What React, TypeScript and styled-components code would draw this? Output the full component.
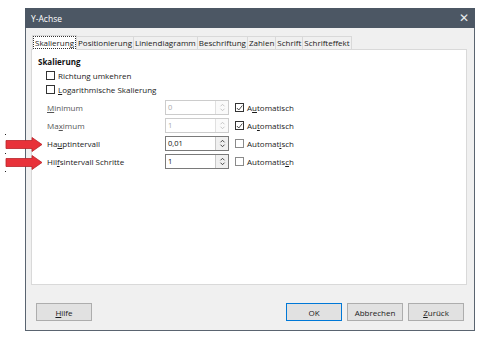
import React from "react";
import styled, { createGlobalStyle } from "styled-components";

const Global = createGlobalStyle`
  html, body { margin: 0; padding: 0; background: #ffffff; }
  body { font-family: "Open Sans", "Noto Sans", "Liberation Sans", sans-serif; }
`;

const Page = styled.div`
  position: relative;
  width: 489px;
  height: 341px;
  padding: 8px 0 0 25px;
  box-sizing: border-box;
`;

const Dialog = styled.div`
  width: 450px;
  height: 323px;
  box-sizing: border-box;
  border: 1px solid #5a6470;
  border-top: none;
  background: #f0f0f0;
  display: flex;
  flex-direction: column;
`;

const TitleBar = styled.div`
  height: 20px;
  background: #4c5764;
  color: #ffffff;
  display: flex;
  align-items: center;
  justify-content: space-between;
  padding: 0 6px 0 6px;
  font-size: 8.5px;
  margin: 0 -1px;
`;

const Close = styled.span`
  font-size: 12px;
  color: #e8ebee;
  font-family: "DejaVu Sans", sans-serif;
  line-height: 1;
`;

const Body = styled.div`
  flex: 1;
  display: flex;
  flex-direction: column;
  padding: 8px 7px 9px 5px;
`;

const Tabs = styled.div`
  display: flex;
  align-items: flex-end;
  height: 14px;
  padding-left: 1px;
`;

const Tab = styled.div<{ $active?: boolean }>`
  font-size: 8px;
  color: #1a1a1a;
  padding: 0 1px;
  height: ${(p) => (p.$active ? "14px" : "12px")};
  line-height: ${(p) => (p.$active ? "13px" : "12px")};
  background: ${(p) => (p.$active ? "#ffffff" : "#f0f0f0")};
  border: 1px solid #d9d9d9;
  border-bottom: ${(p) => (p.$active ? "none" : "1px solid #d9d9d9")};
  margin-left: ${(p) => (p.$active ? "0" : "-1px")};
  position: relative;
  z-index: ${(p) => (p.$active ? 1 : 0)};
  white-space: nowrap;
`;

const Focus = styled.span`
  outline: 1px dotted #333;
  outline-offset: 0px;
  padding: 0 1px;
`;

const Panel = styled.div`
  height: 236px;
  background: #ffffff;
  border: 1px solid #d9d9d9;
  margin-top: -1px;
  padding: 5px 6px;
  box-sizing: border-box;
  display: flex;
  flex-direction: column;
`;

const Heading = styled.div`
  font-size: 8px;
  font-weight: 700;
  color: #111;
  height: 13px;
  line-height: 13px;
`;

const CheckRow = styled.div`
  display: flex;
  align-items: center;
  height: 14px;
  padding-left: 8px;
  gap: 3px;
  font-size: 8px;
  color: #1a1a1a;
`;

const Box = styled.span<{ $checked?: boolean; $dim?: boolean }>`
  width: 9px;
  height: 9px;
  border: 1px solid ${(p) => (p.$dim ? "#8a8a8a" : "#333")};
  background: #fff;
  box-sizing: border-box;
  display: inline-flex;
  align-items: center;
  justify-content: center;
  flex-shrink: 0;
`;

const Grid = styled.div`
  display: grid;
  grid-template-columns: 118px 70px auto;
  row-gap: 3px;
  margin-top: 4px;
  padding-left: 9px;
  align-items: center;
`;

const Label = styled.div<{ $dim?: boolean }>`
  font-size: 8px;
  color: ${(p) => (p.$dim ? "#555" : "#1a1a1a")};
  height: 15px;
  line-height: 15px;
  white-space: nowrap;
`;

const Spin = styled.div<{ $dim?: boolean }>`
  width: 64px;
  height: 15px;
  box-sizing: border-box;
  border: 1px solid ${(p) => (p.$dim ? "#cccccc" : "#7a7a7a")};
  display: flex;
  background: #fff;
`;

const SpinText = styled.div<{ $dim?: boolean }>`
  flex: 1;
  font-size: 7.5px;
  line-height: 13px;
  padding-left: 2px;
  color: ${(p) => (p.$dim ? "#aaaaaa" : "#111")};
`;

const SpinBtn = styled.div<{ $dim?: boolean }>`
  width: 12px;
  border-left: 1px solid ${(p) => (p.$dim ? "#e0e0e0" : "#c8c8c8")};
  background: ${(p) => (p.$dim ? "#fafafa" : "#f0f0f0")};
  display: flex;
  align-items: center;
  justify-content: center;
`;

const AutoWrap = styled.div`
  display: flex;
  align-items: center;
  gap: 3px;
  font-size: 8px;
  color: #1a1a1a;
`;

const Footer = styled.div`
  margin-top: auto;
  display: flex;
  align-items: center;
  padding: 0 3px 0 5px;
  gap: 5px;
`;

const Btn = styled.div<{ $default?: boolean }>`
  width: 56px;
  height: 18px;
  box-sizing: border-box;
  border: 1px solid ${(p) => (p.$default ? "#0078d7" : "#adadad")};
  background: #e1e1e1;
  font-size: 8px;
  color: #1a1a1a;
  display: flex;
  align-items: center;
  justify-content: center;
`;

const Spacer = styled.div`
  flex: 1;
`;

const U = styled.span`
  text-decoration: underline;
`;

const Arrow = styled.svg<{ $top: number }>`
  position: absolute;
  left: 5px;
  top: ${(p) => p.$top}px;
`;

const Dot = styled.span<{ $x: number; $y: number }>`
  position: absolute;
  left: ${(p) => p.$x}px;
  top: ${(p) => p.$y}px;
  width: 1px;
  height: 1px;
  background: #222;
`;

const Tick = () => (
  <svg width="8" height="8" viewBox="0 0 8 8">
    <path d="M1 4 L3.2 6.3 L7.2 1.2" fill="none" stroke="#222" strokeWidth="0.9" />
  </svg>
);

const Arrows = ({ dim }: { dim?: boolean }) => (
  <svg width="7" height="9" viewBox="0 0 7 9">
    <path d="M1.5 3.3 L3.5 1.3 L5.5 3.3" fill="none" stroke={dim ? "#c0c0c0" : "#333"} strokeWidth="0.9" />
    <path d="M1.5 5.7 L3.5 7.7 L5.5 5.7" fill="none" stroke={dim ? "#c0c0c0" : "#333"} strokeWidth="0.9" />
  </svg>
);

const RedArrow = ({ top }: { top: number }) => (
  <Arrow $top={top} width="38" height="15" viewBox="0 0 38 15">
    <path
      d="M1 3.5 H27 V0.5 L37 7.5 L27 14.5 V11.5 H1 Z"
      fill="#e8323a"
      stroke="#b8232a"
      strokeWidth="0.8"
    />
  </Arrow>
);

type Row = {
  label: React.ReactNode;
  value: string;
  dim: boolean;
  checked: boolean;
  auto: React.ReactNode;
};

const rows: Row[] = [
  { label: <><U>M</U>inimum</>, value: "0", dim: true, checked: true, auto: <>A<U>u</U>tomatisch</> },
  { label: <>Ma<U>x</U>imum</>, value: "1", dim: true, checked: true, auto: <>Au<U>t</U>omatisch</> },
  { label: <>Ha<U>u</U>ptintervall</>, value: "0,01", dim: false, checked: false, auto: <>Automat<U>i</U>sch</> },
  { label: <>Hil<U>f</U>sintervall Schritte</>, value: "1", dim: false, checked: false, auto: <>Automatis<U>c</U>h</> },
];

const tabs = ["Positionierung", "Liniendiagramm", "Beschriftung", "Zahlen", "Schrift", "Schrifteffekt"];

export default function App() {
  return (
    <>
      <Global />
      <Page>
        <Dialog>
          <TitleBar>
            <span>Y-Achse</span>
            <Close>✕</Close>
          </TitleBar>
          <Body>
            <Tabs>
              <Tab $active>
                <Focus>Skalierung</Focus>
              </Tab>
              {tabs.map((t) => (
                <Tab key={t}>{t}</Tab>
              ))}
            </Tabs>
            <Panel>
              <Heading>Skalierung</Heading>
              <CheckRow>
                <Box />
                <span>Richtung umkehren</span>
              </CheckRow>
              <CheckRow>
                <Box />
                <span>
                  <U>L</U>ogarithmische Skalierung
                </span>
              </CheckRow>
              <Grid>
                {rows.map((r, i) => (
                  <React.Fragment key={i}>
                    <Label $dim={r.dim}>{r.label}</Label>
                    <Spin $dim={r.dim}>
                      <SpinText $dim={r.dim}>{r.value}</SpinText>
                      <SpinBtn $dim={r.dim}>
                        <Arrows dim={r.dim} />
                      </SpinBtn>
                    </Spin>
                    <AutoWrap>
                      <Box $dim={!r.checked}>{r.checked && <Tick />}</Box>
                      <span>{r.auto}</span>
                    </AutoWrap>
                  </React.Fragment>
                ))}
              </Grid>
            </Panel>
            <Footer>
              <Btn>
                <span>
                  <U>H</U>ilfe
                </span>
              </Btn>
              <Spacer />
              <Btn $default>OK</Btn>
              <Btn>Abbrechen</Btn>
              <Btn>
                <span>
                  <U>Z</U>urück
                </span>
              </Btn>
            </Footer>
          </Body>
        </Dialog>
        <RedArrow top={137} />
        <RedArrow top={155} />
        <Dot $x={5} $y={134} />
        <Dot $x={5} $y={153} />
        <Dot $x={5} $y={171} />
      </Page>
    </>
  );
}
